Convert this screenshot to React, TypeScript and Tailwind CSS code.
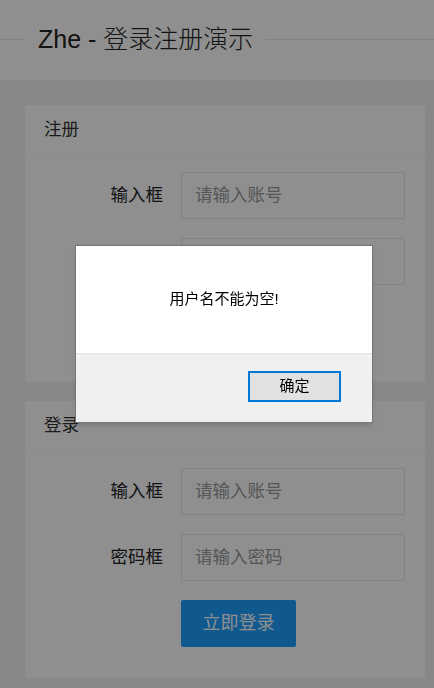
import React from 'react';

const font = { fontFamily: '"Liberation Sans", "Noto Sans CJK SC", sans-serif' };

type Row = { label: string; placeholder: string; type?: string };

const FormCard: React.FC<{ title: string; rows: Row[]; button: string }> = ({ title, rows, button }) => {
  return (
    <div className="bg-white ml-[25px] w-[400px]">
      <div className="h-[50px] flex items-center pl-[19px] text-[17.5px] text-[#333] border-b border-[#f6f6f6]">{title}</div>
      <div className="pt-[17px] pb-[12px] pr-[20px]">
        {rows.map((r, i) => (
          <div key={i} className="flex items-center mb-[19px]">
            <label className="w-[156px] shrink-0 text-right pr-[18px] text-[17.5px] text-[#222]">{r.label}</label>
            <input
              type={r.type || 'text'}
              placeholder={r.placeholder}
              className="flex-1 min-w-0 h-[47px] border border-[#e6e6e6] rounded-[2px] pl-[13px] text-[17.5px] bg-white outline-none placeholder:text-[#999]"
            />
          </div>
        ))}
        <div className="pl-[156px] mb-[19px]">
          <button className="w-[115px] h-[47px] rounded-[2px] bg-[#1E9FFF] text-white text-[18px]">{button}</button>
        </div>
      </div>
    </div>
  );
};

export default function App() {
  return (
    <div className="min-h-[688px] bg-[#f2f2f2] relative" style={font}>
      <div className="bg-white h-[80px]">
        <div className="flex items-center h-[78px]">
          <div className="w-[24px] h-px bg-[#e6e6e6]" />
          <h1 className="pl-[14px] pr-[12px] text-[25px] font-light text-[#222] leading-none">Zhe - 登录注册演示</h1>
          <div className="flex-1 h-px bg-[#e6e6e6]" />
        </div>
      </div>

      <div className="pt-[25px] flex flex-col gap-[19px] pb-[10px]">
        <FormCard
          title="注册"
          rows={[
            { label: '输入框', placeholder: '请输入账号' },
            { label: '密码框', placeholder: '请输入密码', type: 'password' },
          ]}
          button="立即注册"
        />
        <FormCard
          title="登录"
          rows={[
            { label: '输入框', placeholder: '请输入账号' },
            { label: '密码框', placeholder: '请输入密码', type: 'password' },
          ]}
          button="立即登录"
        />
      </div>

      <div className="fixed inset-0 bg-[rgba(0,0,0,0.44)]" />

      <div className="absolute left-[75px] top-[245px] w-[298px] border border-[#777] bg-white shadow-md">
        <div className="h-[107px] flex items-center justify-center text-[15px] text-black">用户名不能为空!</div>
        <div className="h-[69px] bg-[#f0f0f0] border-t border-[#e4e4e4] flex items-start justify-end pt-[17px] pr-[31px]">
          <button className="w-[93px] h-[31px] bg-[#e1e1e1] border-2 border-[#0078d7] text-[15px] text-black">确定</button>
        </div>
      </div>
    </div>
  );
}
